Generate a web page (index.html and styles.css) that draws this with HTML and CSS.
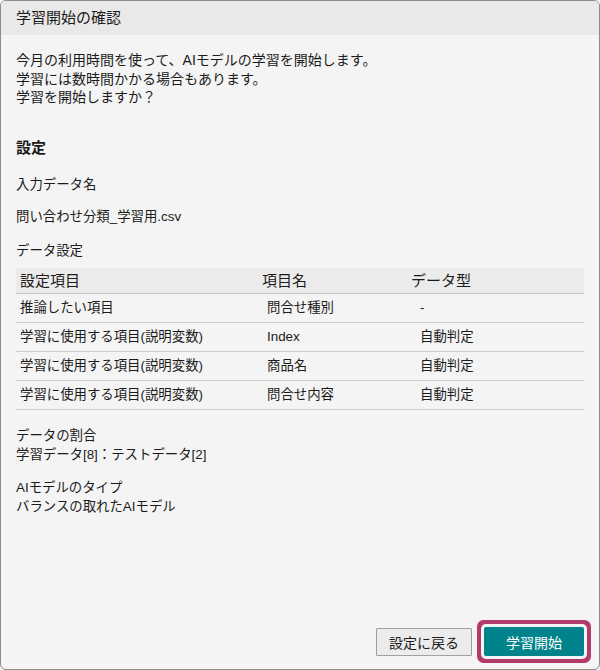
FILE: index.html
```html
<!DOCTYPE html>
<html lang="ja">
<head>
<meta charset="utf-8">
<title>学習開始の確認</title>
<link rel="stylesheet" href="styles.css">
</head>
<body>
<div class="dialog">
  <div class="titlebar">学習開始の確認</div>
  <div class="content">
    <p class="intro">今月の利用時間を使って、AIモデルの学習を開始します。<br>学習には数時間かかる場合もあります。<br>学習を開始しますか？</p>
    <h2 class="heading">設定</h2>
    <p class="label gap-a">入力データ名</p>
    <p class="label gap-b">問い合わせ分類_学習用.csv</p>
    <p class="label gap-c">データ設定</p>
    <div class="table">
      <div class="th c1">設定項目</div>
      <div class="th c2">項目名</div>
      <div class="th c3">データ型</div>

      <div class="td c1">推論したい項目</div>
      <div class="td c2">問合せ種別</div>
      <div class="td c3">-</div>

      <div class="td c1">学習に使用する項目(説明変数)</div>
      <div class="td c2">Index</div>
      <div class="td c3">自動判定</div>

      <div class="td c1">学習に使用する項目(説明変数)</div>
      <div class="td c2">商品名</div>
      <div class="td c3">自動判定</div>

      <div class="td c1">学習に使用する項目(説明変数)</div>
      <div class="td c2">問合せ内容</div>
      <div class="td c3">自動判定</div>
    </div>
    <p class="label gap-d">データの割合<br>学習データ[8]：テストデータ[2]</p>
    <p class="label gap-e">AIモデルのタイプ<br>バランスの取れたAIモデル</p>
  </div>
  <div class="footer">
    <button class="btn btn-secondary" type="button">設定に戻る</button>
    <button class="btn btn-primary" type="button">学習開始</button>
  </div>
</div>
</body>
</html>
```
FILE: styles.css
```css
* { box-sizing: border-box; }
html, body {
  margin: 0;
  padding: 0;
  width: 600px;
  height: 670px;
  background: #f4f4f4;
}
body {
  font-family: "Liberation Sans", "Noto Sans CJK JP", sans-serif;
  color: #1b1b1b;
}
.dialog {
  width: 600px;
  height: 670px;
  border: 1px solid #8c8c8c;
  border-radius: 6px;
  overflow: hidden;
  background: #f4f4f4;
  display: flex;
  flex-direction: column;
}
.titlebar {
  height: 34px;
  flex: none;
  background: #e9e9e9;
  font-size: 15px;
  line-height: 34px;
  padding-left: 15px;
  color: #1b1b1b;
}
.content {
  flex: 1;
  padding: 16px 15px 0 15px;
}
p { margin: 0; }
.intro {
  font-size: 14px;
  line-height: 18.5px;
}
.heading {
  margin: 31px 0 0 0;
  font-size: 15px;
  font-weight: bold;
  line-height: 20px;
}
.label {
  font-size: 13.4px;
  line-height: 19px;
}
.gap-a { margin-top: 17px; }
.gap-b { margin-top: 13px; }
.gap-c { margin-top: 15px; }
.gap-d { margin-top: 15.5px; }
.gap-e { margin-top: 14px; }
.table {
  margin-top: 8.5px;
  display: grid;
  grid-template-columns: 242px 149px 1fr;
}
.th {
  background: #ebebeb;
  height: 26px;
  line-height: 26px;
  font-size: 15px;
  border-bottom: 1px solid #c6c6c6;
  padding-left: 4px;
}
.td {
  height: 29px;
  line-height: 28px;
  font-size: 13.4px;
  border-bottom: 1px solid #cdcdcd;
}
.td.c1 { padding-left: 4px; }
.td.c2 { padding-left: 9px; }
.td.c3 { padding-left: 13px; }
.footer {
  flex: none;
  display: flex;
  justify-content: flex-end;
  align-items: flex-end;
  gap: 12px;
  padding: 0 15px 13px 15px;
}
.btn {
  font-family: "Liberation Sans", "Noto Sans CJK JP", sans-serif;
  font-size: 14px;
  padding: 0;
  margin: 0;
  cursor: pointer;
}
.btn-secondary {
  width: 96px;
  height: 28px;
  background: #ececec;
  border: 1px solid #a0a0a0;
  border-radius: 1px;
  color: #1b1b1b;
}
.btn-primary {
  width: 100px;
  height: 29px;
  background: #00838a;
  border: none;
  border-radius: 2px;
  color: #ffffff;
  box-shadow: 0 0 0 3px #f4f4f4, 0 0 0 7px #b23b6b;
}
```
